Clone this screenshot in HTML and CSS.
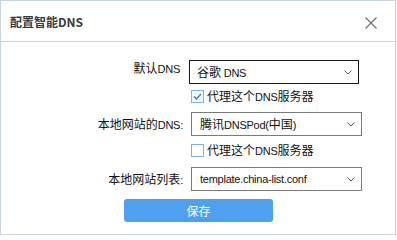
FILE: index.html
```html
<!DOCTYPE html>
<html lang="zh-CN">
<head>
<meta charset="utf-8">
<title>配置智能DNS</title>
<link rel="stylesheet" href="styles.css">
</head>
<body>
<div class="window">
  <div class="titlebar">
    <span class="title">配置智能DNS</span>
    <svg class="close" width="12" height="12" viewBox="0 0 12 12"><path d="M0.5 0.5 L11.5 11.5 M11.5 0.5 L0.5 11.5" stroke="#6b6b6b" stroke-width="1.1" fill="none"/></svg>
  </div>
  <div class="content">
    <div class="form">
      <div class="lbl lbl-first">默认<span class="lat">DNS</span></div>
      <div class="select select-active select-first"><span>谷歌 <span class="lat">DNS</span></span><svg class="chev" width="8" height="5" viewBox="0 0 8 5"><polyline points="0.5,0.5 4,4 7.5,0.5" fill="none" stroke="#5a5a5a" stroke-width="1"/></svg></div>

      <div class="spacer"></div>
      <div class="check check-first"><svg class="box" width="13" height="13" viewBox="0 0 13 13"><rect x="0.5" y="0.5" width="12" height="12" fill="#f3f8fe" stroke="#86b3e6"/><polyline points="3,6.5 5.5,9 10,4" fill="none" stroke="#3d7cc9" stroke-width="1.4"/></svg><span>代理这个<span class="lat">DNS</span>服务器</span></div>

      <div class="lbl lbl-second">本地网站的<span class="lat">DNS:</span></div>
      <div class="select select-second"><span>腾讯<span class="lat">DNSPod(</span>中国<span class="lat">)</span></span><svg class="chev" width="8" height="5" viewBox="0 0 8 5"><polyline points="0.5,0.5 4,4 7.5,0.5" fill="none" stroke="#5a5a5a" stroke-width="1"/></svg></div>

      <div class="spacer"></div>
      <div class="check check-second"><svg class="box" width="13" height="13" viewBox="0 0 13 13"><rect x="0.5" y="0.5" width="12" height="12" fill="#ffffff" stroke="#8eaed6"/></svg><span>代理这个<span class="lat">DNS</span>服务器</span></div>

      <div class="lbl lbl-third">本地网站列表<span class="lat">:</span></div>
      <div class="select select-third"><span class="lat">template.china-list.conf</span><svg class="chev" width="8" height="5" viewBox="0 0 8 5"><polyline points="0.5,0.5 4,4 7.5,0.5" fill="none" stroke="#5a5a5a" stroke-width="1"/></svg></div>
    </div>
    <button class="save">保存</button>
  </div>
</div>
</body>
</html>
```
FILE: styles.css
```css
html, body {
  margin: 0;
  padding: 0;
  background: #ffffff;
}
body {
  width: 397px;
  height: 236px;
  overflow: hidden;
  font-family: "Noto Sans CJK SC", "Noto Sans", sans-serif;
  font-size: 12px;
  color: #111;
}
.lat {
  font-family: "Liberation Sans", "Noto Sans", sans-serif;
  font-size: 11px;
  letter-spacing: -0.25px;
}
.window {
  box-sizing: border-box;
  width: 396px;
  height: 235px;
  border: 1px solid #c8d5de;
  background: #fff;
  display: flex;
  flex-direction: column;
}
.titlebar {
  box-sizing: border-box;
  height: 41px;
  border-bottom: 1px solid #c8d5de;
  display: flex;
  align-items: center;
  justify-content: space-between;
  padding: 0 18px 0 9px;
}
.title {
  font-weight: 700;
  font-size: 12px;
  color: #3a3a3a;
  line-height: 16px;
  margin-top: 2px;
}
.close {
  display: block;
  margin-top: 4px;
}
.content {
  display: flex;
  flex-direction: column;
  padding-top: 18px;
}
.form {
  display: grid;
  grid-template-columns: 182px 172px;
  column-gap: 8px;
  align-items: start;
}
.lbl {
  text-align: right;
  line-height: 16px;
  white-space: nowrap;
  color: #111;
}
.lbl-first {
  padding-right: 3px;
}
.lbl-second { margin-top: 13px; }
.lbl-third { margin-top: 14px; }
.select {
  box-sizing: border-box;
  height: 24px;
  width: 171px;
  border: 1px solid #7a7a7a;
  display: flex;
  align-items: center;
  justify-content: space-between;
  padding: 0 6px 0 8px;
  color: #111;
  white-space: nowrap;
  line-height: 16px;
}
.select-active {
  border-color: #1a1a1a;
  padding-left: 7px;
}
.select-first {
  margin-left: -2px;
  width: 170px;
}
.select-second { margin-top: 9px; }
.select-third { margin-top: 10px; }
.chev { display: block; }
.check {
  display: flex;
  align-items: center;
  gap: 3px;
  height: 13px;
  white-space: nowrap;
  color: #111;
  line-height: 16px;
}
.check-first { margin-top: 6px; }
.check-second { margin-top: 8px; }
.box { display: block; flex: none; }
.save {
  align-self: center;
  margin: 8px 0 0 1px;
  width: 149px;
  height: 23px;
  border: none;
  border-radius: 3px;
  background: #4fa1f0;
  color: #fff;
  font-family: "Noto Sans CJK SC", "Noto Sans", sans-serif;
  font-size: 12px;
  padding: 0;
}
```
